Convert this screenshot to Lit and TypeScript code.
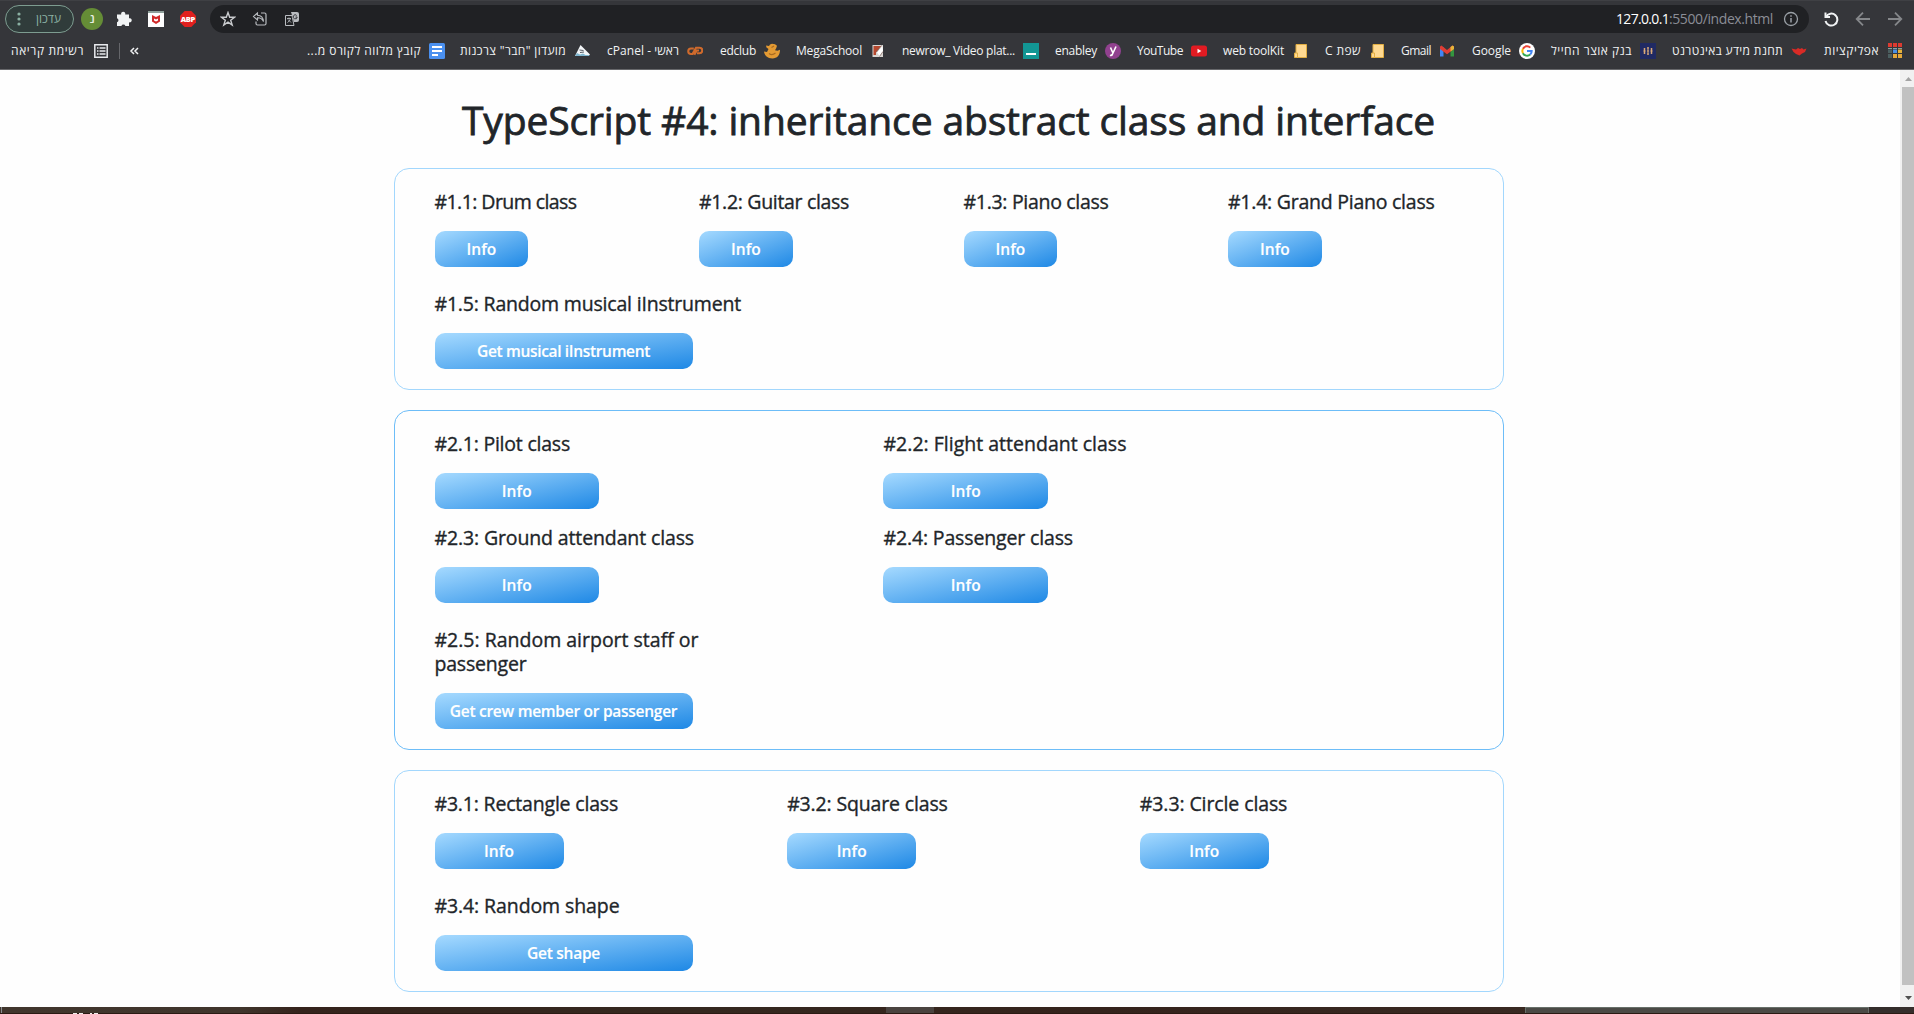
import { LitElement, html, css, svg, nothing, TemplateResult } from "lit";
import { customElement, property } from "lit/decorators.js";
import { styleMap } from "lit/directives/style-map.js";

/** A single run of text whose tracking is adjusted so that it fills a given width. */
@customElement("fit-text")
class FitText extends LitElement {
  static styles = css`
    :host { display: inline-block; white-space: nowrap; flex: none; }
    .run { display: inline-block; unicode-bidi: plaintext; }
  `;
  @property() text = "";
  @property({ type: Number }) width = 0;
  render() {
    return html`<span class="run">${this.text}</span>`;
  }
  firstUpdated() {
    const run = this.renderRoot.querySelector(".run") as HTMLElement;
    const natural = run.getBoundingClientRect().width;
    if (this.width && natural) {
      run.style.letterSpacing = `${(this.width - natural) / this.text.length}px`;
      this.style.width = `${this.width}px`;
    }
  }
}

const icon = (body: unknown, w = 16, h = 16) =>
  html`<svg class="ico" width=${w} height=${h} viewBox="0 0 16 16" fill="none">${body}</svg>`;

const folder = svg`<path d="M4 1.5h10.500v13H4z" fill="#ffd991" stroke="#e2ae42"/><path d="M2.500 10h3v4.500h-3z" fill="#ffd991" stroke="#e2ae42"/>`;

interface Bookmark { label: string; text: number; slot: number; glyph: TemplateResult | unknown; }

/* slot: distance from this icon's right edge to the next one's */
const bookmarks: Bookmark[] = [
  { label: "אפליקציות", text: 55, slot: 96, glyph: svg`
    <path d="M1 0h4v4H1zM6 0h4v4H6zM11 0h4v4h-4z" fill="#dd3a30"/>
    <path d="M1 5h4v1H1zM6 5h4v1H6zM11 5h4v1h-4z" fill="#8fa09b"/>
    <path d="M1 6.500h4V10H1z" fill="#4c5f60"/><path d="M6 6.500h4V10H6z" fill="#4a90e2"/><path d="M11 6.500h4V10h-4z" fill="#e6b23a"/>
    <path d="M1 11h4v4H1z" fill="#4c5f60"/><path d="M6 11h4v4H6zM11 11h4v4h-4z" fill="#e6a93a"/>` },
  { label: "תחנת מידע באינטרנט", text: 111, slot: 151, glyph: svg`<path d="M.5 5.500 5 6.500 7 5l2 1 2-1 1.500 1.500 3-1L14 9l-3 1.500-2.500 2L5 11 2.500 9z" fill="#d92b26"/>` },
  { label: "בנק אוצר החייל", text: 81, slot: 121, glyph: svg`<path d="M0 0h16v16H0z" fill="#202a63"/><path d="M4.500 5v2.200M4.500 8.800v2.200M8 4v2.800M8 9.200v2.800M11.500 5v2.200M11.500 8.800v2.200M3.500 8h2M7 8h2M10.500 8h2" stroke="#d9a978" stroke-width="1.500"/>` },
  { label: "Google", text: 39, slot: 80, glyph: svg`<circle cx="8" cy="8" r="8" fill="#fff"/>
    <path d="M11.300 4.600A4.700 4.700 0 0 0 3.900 5.800" stroke="#ea4335" stroke-width="2"/><path d="M3.900 5.800a4.700 4.700 0 0 0 0 4.400" stroke="#fbbc05" stroke-width="2"/>
    <path d="M3.900 10.200a4.700 4.700 0 0 0 7.300 1.300" stroke="#34a853" stroke-width="2"/><path d="M8 8h4.700a4.700 4.700 0 0 1-1.500 3.500" stroke="#4285f4" stroke-width="2"/>` },
  { label: "Gmail", text: 30, slot: 70, glyph: svg`<path d="M1 4h3.500v9.500H1z" fill="#4285f4"/><path d="M11.500 4H15v9.500h-3.500z" fill="#34963f"/><path d="M1 5V3.500L2.500 2.500 8 7l5.500-4.500L15 3.500V6l-7 5.300L1 6z" fill="#e13d33"/><path d="M11.500 4 13.500 2.500 15 3.500V6l-3.500 2.500z" fill="#e6b53a"/>` },
  { label: "שפת C", text: 36, slot: 77, glyph: folder },
  { label: "web toolKit", text: 61, slot: 101, glyph: folder },
  { label: "YouTube", text: 46, slot: 86, glyph: svg`<rect y="2.500" width="16" height="11" rx="2.500" fill="#e11b22"/><path d="M6.500 5.800v4.400L10.300 8z" fill="#fff"/>` },
  { label: "enabley", text: 42, slot: 82, glyph: svg`<circle cx="8" cy="8" r="8" fill="#91418f"/><path d="M5.500 4.500 7.700 9.500M11 3.500 7.300 11.500Q6.600 12.800 5 12.200" stroke="#fff" stroke-width="1.600"/>` },
  { label: "newrow_ Video plat...", text: 113, slot: 153, glyph: svg`<path d="M0 0h16v16H0z" fill="#129694"/><path d="M3 10h10v2H3z" fill="#fff"/>` },
  { label: "MegaSchool", text: 66, slot: 106, glyph: svg`<path d="M2.500 2h10.500v12H2.500z" fill="#d9d6d2"/><path d="M3.500 3h7.500L6 9.500V12H3.500z" fill="#b6492f"/><path d="M12.500 3 7 9.500l2.500 3.500L13 8z" fill="#fff"/><path d="M11.500 2.500 6.500 9M9.500 13.500 13 8.500" stroke="#6d4a44" stroke-width=".6"/>` },
  { label: "edclub", text: 36, slot: 77, glyph: svg`<path d="M2 2.500 5 3 6 1.500 8 .8l3 .5 2 1.500-.8 2.500-1.200 2 2.500.5 2.500-1c0 5.500-3 8.700-7.500 8.700C3.500 15.500.5 12.500 0 8.500l3 .5 1.500-3-2-1.500z" fill="#e39a33"/><path d="M7.500 4.500 10 3M5 10.500Q8 13 11.500 10" stroke="#a86a20" stroke-width="1.100"/>` },
  { label: "cPanel - ראשי", text: 72, slot: 113, glyph: svg`<path d="M6.800 5.500H4A2.700 2.700 0 0 0 4 11H5.500L9 4.700H12.500a2.700 2.700 0 0 1 0 5.500H10M7.300 11.800 9.800 7.500H12" stroke="#cf6a2c" stroke-width="2.100"/>` },
  { label: "מועדון \"חבר\" צרכנות", text: 106, slot: 145, glyph: svg`<path d="M6.500 2 16 11.500 14.500 13 1 13z" fill="#f3f6f8"/><path d="M1 13 3 10l3 1.500 3-1 2.500 1.500h4L14.500 13z" fill="#7fb6cf"/><path d="M5.500 7l4 .5M6 9.500l4-.5" stroke="#555b63"/>` },
  { label: "קובץ מלווה לקורס מ...", text: 114, slot: 138, glyph: svg`<rect width="16" height="16" rx="1.500" fill="#4a90f0"/><path d="M3 4h10M3 8h10M3 12h6" stroke="#fff" stroke-width="1.800"/>` },
];

@customElement("browser-chrome")
class BrowserChrome extends LitElement {
  static styles = css`
    :host { display: block; height: 70px; box-sizing: border-box; background: #35363a; border-top: 1px solid #3f4044; border-bottom: 1px solid #67686b;
      font: 12px/16px "Open Sans", "Noto Sans", "Liberation Sans", sans-serif; color: #f1f3f4; }
    .ico { display: block; flex: none; }
    .bar { display: flex; align-items: center; height: 28px; padding: 4px 10px 0 5px; }
    .update { display: flex; align-items: center; box-sizing: border-box; width: 69px; height: 28px; border: 1px solid #7d9c90; border-radius: 14px; background: #303c3b; color: #8ab0a2; padding: 0 12px 0 11px; justify-content: space-between; }
    .avatar { width: 22px; height: 22px; border-radius: 50%; background: #658d36; margin-left: 7px; text-align: center; line-height: 21px; font-weight: 600; color: #e9eee2; }
    .ext { display: flex; gap: 16px; padding: 0 14px 0 13px; width: 80px; }
    .omni { display: flex; align-items: center; box-sizing: border-box; width: 1599px; height: 28px; border-radius: 14px; background: #202124; padding: 0 10px; }
    .left { display: flex; gap: 16px; flex: 1; }
    .url { display: flex; font-size: 14px; line-height: 20px; margin-right: 10px; }
    .host { color: #fff; }
    .path { color: #8b8d96; }
    .nav { display: flex; gap: 16px; margin-left: 14px; }
    .marks { display: flex; align-items: center; height: 36px; }
    .reading { display: flex; align-items: center; gap: 10px; padding-left: 11px; width: 108px; box-sizing: border-box; }
    .rule { width: 1px; height: 16px; background: #65666a; margin-left: 11px; }
    .more { margin-left: 9px; }
    .list { display: flex; direction: rtl; flex: 1; padding-right: 11px; }
    .mark { display: flex; flex: none; gap: 8px; align-items: center; }
  `;
  render() {
    return html`
      <div class="bar">
        <div class="update">
          <svg class="ico" width="4" height="16" viewBox="0 0 4 16" fill="#8ab0a2"><circle cx="2" cy="3" r="1.600"/><circle cx="2" cy="8" r="1.600"/><circle cx="2" cy="13" r="1.600"/></svg>
          <fit-text text="עדכון" width="25"></fit-text>
        </div>
        <div class="avatar">נ</div>
        <div class="ext">
          ${icon(svg`<path d="M1 3.500h4.200a2.100 2.100 0 1 1 4 0H13v3.800a2.100 2.100 0 1 1 0 4V15H9.400a2.100 2.100 0 0 0-4 0H1v-3.700a2.100 2.100 0 0 0 0-4z" fill="#f1f3f4"/>`)}
          ${icon(svg`<path d="M0 0h16v16H0z" fill="#fff"/><path d="M0 0h16v2H0z" fill="#8fa09b"/><path d="M4 4l4 2 4-2v6.500L8 13l-4-2.500z" fill="#d02a2a"/><path d="M6 7.500 8 8.500l2-1v2L8 10.500l-2-1z" fill="#fff"/>`)}
          ${icon(svg`<path d="M4.700 0h6.600L16 4.700v6.600L11.300 16H4.700L0 11.300V4.700z" fill="#e0201f"/><text x="8" y="11" font-family="Open Sans" font-weight="800" font-size="7.500" text-anchor="middle" textLength="14.500" fill="#fff">ABP</text>`)}
        </div>
        <div class="omni">
          <div class="left">
            ${icon(svg`<path d="M8 1.500 9.700 6.200H14.600L10.700 9.200 12.200 14 8 11.100 3.800 14 5.300 9.200 1.400 6.200H6.300z" stroke="#c9cbce" stroke-width="1.400"/>`)}
            ${icon(svg`<path d="M5.500 2 1.500 5.500 5.500 9V6.800Q9.500 6.500 11.500 10.500 11 4.500 5.500 4.200z" stroke="#b9bcc0" stroke-width="1.100"/><path d="M9 2h3.500Q14 2 14 3.500v9Q14 14 12.500 14h-7Q4 14 4 12.500V10.500" stroke="#b9bcc0" stroke-width="1.200"/>`)}
            ${icon(svg`<path d="M7 1h6Q15 1 15 3v6Q15 11 13 11H10z" fill="#b9bcc0"/><path d="M1.500 4.500h6.500L10 14.500H1.500z" stroke="#b9bcc0"/><path d="M3 7.500h4M5 6.500v1M6.500 7.500Q6 10 3.500 11.500M4 8.500 7 11.500" stroke="#b9bcc0" stroke-width=".9"/><path d="M12.700 4.500A2 2 0 1 0 13.200 6H11.500" stroke="#35363a"/>`)}
          </div>
          <div class="url">
            <fit-text class="host" text="127.0.0.1" width="53"></fit-text>
            <fit-text class="path" text=":5500/index.html" width="104"></fit-text>
          </div>
          ${icon(svg`<circle cx="8" cy="8" r="6.500" stroke="#9aa0a6" stroke-width="1.300"/><path d="M8 7v4.500M8 4.200v1.600" stroke="#9aa0a6" stroke-width="1.500"/>`)}
        </div>
        <div class="nav">
          ${icon(svg`<path d="M2.500 1.500v4.500h4.500" stroke="#f1f3f4" stroke-width="2"/><path d="M3 5.800A6 6 0 1 1 2.500 10" stroke="#f1f3f4" stroke-width="2"/>`)}
          ${icon(svg`<path d="M15 8H2M8 1.700 1.700 8 8 14.300" stroke="#85878a" stroke-width="1.800"/>`)}
          ${icon(svg`<path d="M1 8h13M8 1.700 14.300 8 8 14.300" stroke="#85878a" stroke-width="1.800"/>`)}
        </div>
      </div>
      <div class="marks">
        <div class="reading">
          <fit-text text="רשימת קריאה" width="73"></fit-text>
          <svg class="ico" width="14" height="14" viewBox="0 0 14 14" fill="none"><path d="M.8.8h12.400v12.400H.8z" stroke="#e8eaed" stroke-width="1.500"/><path d="M3 4h1.500M5.500 4h6M3 7h1.500M5.500 7h6M3 10h1.500M5.500 10h6" stroke="#e8eaed" stroke-width="1.400"/></svg>
        </div>
        <div class="rule"></div>
        <svg class="ico more" width="10" height="10" viewBox="0 0 10 10" fill="none"><path d="M5 2 2 5l3 3M9 2 6 5l3 3" stroke="#f1f3f4" stroke-width="1.500"/></svg>
        <div class="list">
          ${bookmarks.map((b) => html`<div class="mark" style=${styleMap({ width: `${b.slot}px` })}>
            ${icon(b.glyph)}<fit-text .text=${b.label} .width=${b.text}></fit-text>
          </div>`)}
        </div>
      </div>`;
  }
}

interface Exercise { title: string; width: number; }
interface Section { name: string; items: Exercise[]; random: string; randomWidth: number; action: string; actionWidth: number; }

const sections: Section[] = [
  { name: "four", items: [
      { title: "#1.1: Drum class", width: 142 }, { title: "#1.2: Guitar class", width: 150 },
      { title: "#1.3: Piano class", width: 145 }, { title: "#1.4: Grand Piano class", width: 206.500 } ],
    random: "#1.5: Random musical iInstrument", randomWidth: 306.500, action: "Get musical iInstrument", actionWidth: 173 },
  { name: "two", items: [
      { title: "#2.1: Pilot class", width: 135.500 }, { title: "#2.2: Flight attendant class", width: 243 },
      { title: "#2.3: Ground attendant class", width: 259.500 }, { title: "#2.4: Passenger class", width: 189.500 } ],
    random: "#2.5: Random airport staff or|passenger", randomWidth: 264, action: "Get crew member or passenger", actionWidth: 227.500 },
  { name: "three", items: [
      { title: "#3.1: Rectangle class", width: 183.500 }, { title: "#3.2: Square class", width: 160.500 },
      { title: "#3.3: Circle class", width: 147.500 } ],
    random: "#3.4: Random shape", randomWidth: 185, action: "Get shape", actionWidth: 73 },
];

@customElement("exercise-card")
class ExerciseCard extends LitElement {
  static styles = css`
    :host { display: block; }
    .card { box-sizing: border-box; border: 1px solid #a2d7fd; border-radius: 15px; padding: 20px 40px; }
    .card.two { border-color: #6dbdf8; }
    .grid { display: grid; column-gap: 30px; row-gap: 16px; }
    .four .grid { grid-template-columns: repeat(4, 1fr); }
    .three .grid { grid-template-columns: repeat(3, 1fr); }
    .two .grid { grid-template-columns: repeat(2, 411.200px); column-gap: 37.800px; }
    .title { margin: 0 0 17px; padding-top: 1px; font-size: 19.500px; line-height: 24px; font-weight: 500; color: #212529; -webkit-text-stroke: .35px #212529; }
    .line { display: block; }
    .btn { display: flex; align-items: center; justify-content: center; width: 40%; height: 36px; padding: 0; border: 0; border-radius: 10px;
      background: linear-gradient(to bottom right, #a6daff, #1e88e5); color: #fff; font: 600 15.500px/24px "Open Sans", "Noto Sans", sans-serif; -webkit-text-stroke: .15px #fff; }
    .random { margin-top: 24px; }
    .random .btn { width: 258px; }
  `;
  @property({ attribute: false }) data!: Section;
  render() {
    const s = this.data;
    const [first, second] = s.random.split("|");
    return html`<section class="card ${s.name}">
      <div class="grid">
        ${s.items.map((i) => html`<div>
          <h5 class="title"><fit-text class="line" .text=${i.title} .width=${i.width}></fit-text></h5>
          <button class="btn"><fit-text text="Info" width="30"></fit-text></button>
        </div>`)}
      </div>
      <div class="random">
        <h5 class="title">
          <fit-text class="line" .text=${first} .width=${s.randomWidth}></fit-text>
          ${second ? html`<fit-text class="line" .text=${second} .width=${92}></fit-text>` : nothing}
        </h5>
        <button class="btn"><fit-text .text=${s.action} .width=${s.actionWidth}></fit-text></button>
      </div>
    </section>`;
  }
}

@customElement("app-root")
class AppRoot extends LitElement {
  static styles = css`
    :host { display: flex; flex-direction: column; width: 1914px; height: 1014px; overflow: hidden; background: #fefefe; font-family: "Open Sans", "Noto Sans", sans-serif; }
    .view { display: flex; height: 937px; flex: none; }
    .page { flex: 1; padding-left: 393.500px; box-sizing: border-box; }
    .content { width: 1110px; }
    .heading { display: flex; justify-content: center; height: 48px; margin: 26px 0 24px; font-size: 39px; line-height: 48px; font-weight: 500; color: #212529; -webkit-text-stroke: .8px #212529; }
    .cards { display: flex; flex-direction: column; gap: 20px; }
    .scroll { display: flex; flex-direction: column; width: 14px; background: #f1f1f1; align-items: flex-end; }
    .arrow { display: block; width: 12px; }
    .up { height: 17px; }
    .down { height: 22px; }
    .thumb { width: 12px; flex: 1; background: #c1c1c1; }
    .taskbar { display: flex; height: 7px; box-sizing: border-box; background: linear-gradient(90deg, #41362d 0, #40352c 240px, #35231c 300px, #35281f 700px, #35231c 1100px, #3b2e27 1914px); border-bottom: 1px solid #2b1a13; }
    .edge { width: 1px; margin-left: 1px; background: #8a8d92; }
    .clock { display: flex; align-items: flex-end; gap: 2px; width: 26px; margin: 0 0 -1px 71px; }
    .tick { width: 4px; height: 1px; background: #f0eeec; }
    .tick.gap { width: 2px; margin-left: 5px; }
    .slot { width: 48px; margin-left: 787px; background: #4a433f; }
    .window { box-sizing: border-box; width: 344px; margin-left: 591px; background: #4b4a46; border: 1px solid #68706a; border-bottom: 0; }
    .tail { flex: 1; background: #352e2c; }
  `;
  render() {
    return html`
      <browser-chrome></browser-chrome>
      <div class="view">
        <main class="page"><div class="content">
          <h1 class="heading"><fit-text text="TypeScript #4: inheritance abstract class and interface" width="973"></fit-text></h1>
          <div class="cards">${sections.map((s) => html`<exercise-card .data=${s}></exercise-card>`)}</div>
        </div></main>
        <div class="scroll">
          <svg class="arrow up" viewBox="0 0 12 17"><path d="M3 11h7L6.500 7z" fill="#a3a3a3"/></svg>
          <div class="thumb"></div>
          <svg class="arrow down" viewBox="0 0 12 22"><path d="M3 11h7l-3.500 4z" fill="#505050"/></svg>
        </div>
      </div>
      <div class="taskbar">
        <div class="edge"></div>
        <div class="clock"><i class="tick"></i><i class="tick"></i><i class="tick gap"></i><i class="tick"></i></div>
        <div class="slot"></div><div class="window"></div><div class="tail"></div>
      </div>`;
  }
}
